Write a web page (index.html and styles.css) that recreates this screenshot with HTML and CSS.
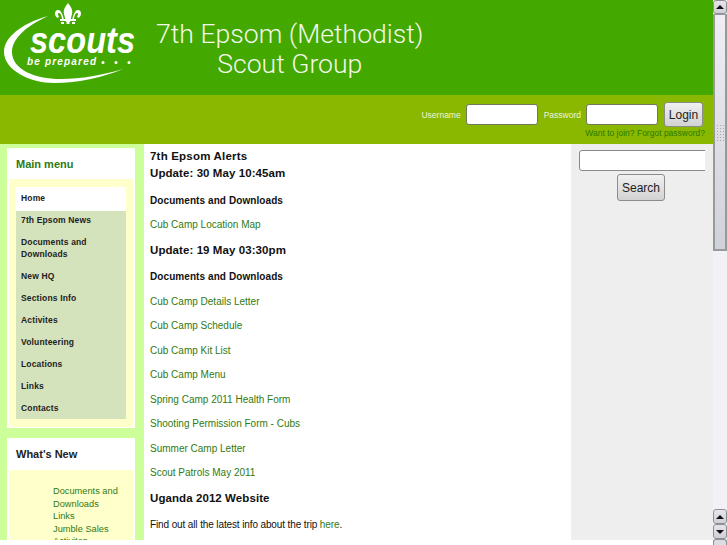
FILE: index.html
```html
<!DOCTYPE html>
<html lang="en">
<head>
  <meta charset="UTF-8">
  <title>7th Epsom (Methodist) Scout Group</title>
  <link rel="stylesheet" href="styles.css">
</head>
<body>
  <div class="page">
    <div class="header">
      <svg class="logo" width="140" height="95" viewBox="0 0 140 95">
        <!-- fleur de lis -->
        <g fill="#fff">
          <path d="M68 3c3 4 5 7 4 11l-2 8h-4l-2-8c-1-4 1-7 4-11z"/>
          <path d="M64 20c-1-5-3-10-6-10-4 0-4 7 0 8l1-2c-2-1-1-3 0-3 2 0 3 4 3 7zM72 20c1-5 3-10 6-10 4 0 4 7 0 8l-1-2c2-1 1-3 0-3-2 0-3 4-3 7z"/>
          <rect x="60" y="19" width="16" height="2"/>
          <path d="M61 22h3v2h-3zM66.500 22h3v2h-3zM72 22h3v2h-3z"/>
        </g>
        <!-- swoosh -->
        <path fill="#fff" d="M48 16C20 24 4 38 4 52c0 18 26 31 50 31 25 0 50-6 69-14-20 6-42 10-62 10C34 79 12 69 12 52c0-13 14-26 36-36z"/>
        <text class="logo-word" x="30" y="53" textLength="105" lengthAdjust="spacingAndGlyphs">scouts</text>
        <text class="logo-tag" x="27" y="65" textLength="69">be prepared</text>
        <circle cx="103" cy="62.500" r="1.500" fill="#fff"/>
        <circle cx="116" cy="62.500" r="1.500" fill="#fff"/>
        <circle cx="129" cy="62.500" r="1.500" fill="#fff"/>
      </svg>
      <h1 class="site-name">7th Epsom (Methodist)<br>Scout Group</h1>
    </div>

    <div class="login-bar">
      <div class="login-row">
        <label class="login-label">Username</label>
        <input class="text-box login-box" type="text">
        <label class="login-label">Password</label>
        <input class="text-box login-box" type="text">
        <button class="btn login-btn">Login</button>
      </div>
      <div class="login-links"><a href="#">Want to join?</a> <a href="#">Forgot password?</a></div>
    </div>

    <div class="columns">
      <div class="left-col">
        <div class="block">
          <h2 class="block-title green">Main menu</h2>
          <div class="block-body">
            <ul class="menu">
              <li class="current"><a href="#">Home</a></li>
              <li><a href="#">7th Epsom News</a></li>
              <li><a href="#">Documents and Downloads</a></li>
              <li><a href="#">New HQ</a></li>
              <li><a href="#">Sections Info</a></li>
              <li><a href="#">Activites</a></li>
              <li><a href="#">Volunteering</a></li>
              <li><a href="#">Locations</a></li>
              <li><a href="#">Links</a></li>
              <li><a href="#">Contacts</a></li>
            </ul>
          </div>
        </div>
        <div class="block">
          <h2 class="block-title">What's New</h2>
          <div class="block-body news-body">
            <ul class="news">
              <li><a href="#">Documents and Downloads</a></li>
              <li><a href="#">Links</a></li>
              <li><a href="#">Jumble Sales</a></li>
              <li><a href="#">Activites</a></li>
            </ul>
          </div>
        </div>
      </div>

      <div class="content">
        <div class="alerts-title">7th Epsom Alerts</div>
        <h3>Update: 30 May 10:45am</h3>
        <p><strong>Documents and Downloads</strong></p>
        <p><a href="#">Cub Camp Location Map</a></p>
        <h3>Update: 19 May 03:30pm</h3>
        <p><strong>Documents and Downloads</strong></p>
        <p><a href="#">Cub Camp Details Letter</a></p>
        <p><a href="#">Cub Camp Schedule</a></p>
        <p><a href="#">Cub Camp Kit List</a></p>
        <p><a href="#">Cub Camp Menu</a></p>
        <p><a href="#">Spring Camp 2011 Health Form</a></p>
        <p><a href="#">Shooting Permission Form - Cubs</a></p>
        <p><a href="#">Summer Camp Letter</a></p>
        <p><a href="#">Scout Patrols May 2011</a></p>
        <h3>Uganda 2012 Website</h3>
        <p class="tight">Find out all the latest info about the trip <a href="#">here</a>.</p>
      </div>

      <div class="right-col">
        <div class="search-clip"><input class="text-box search-box" type="text"></div>
        <button class="btn search-btn">Search</button>
      </div>
    </div>
  </div>

  <div class="scrollbar">
    <div class="arrow top-arrow"><span class="tri-up"></span></div>
    <div class="thumb"><span class="grip"></span></div>
    <div class="track"></div>
    <div class="arrow"><span class="tri-up"></span></div>
    <div class="arrow"><span class="tri-down"></span></div>
    <div class="arrow-stub"></div>
  </div>
</body>
</html>
```

FILE: styles.css
```css
html, body {
  height: 100%;
  margin: 0;
  overflow: hidden;
}
body {
  display: flex;
  font-family: "Liberation Sans", Arial, sans-serif;
  font-size: 10px;
  color: #111;
  background: #fff;
}
a {
  color: #2f7a12;
  text-decoration: none;
}

.page {
  width: 713px;
  height: 540px;
  overflow: hidden;
  flex: none;
}

/* header */
.header {
  height: 95px;
  background: #43a800;
  display: flex;
}
.logo {
  flex: none;
}
.logo-word {
  font-size: 37px;
  font-weight: bold;
  font-style: italic;
  fill: #fff;
}
.logo-tag {
  font-size: 10px;
  font-weight: bold;
  font-style: italic;
  fill: #fff;
}
.site-name {
  margin: 19px 0 0 16px;
  font-family: Roboto, sans-serif;
  font-weight: 300;
  font-size: 26.600px;
  line-height: 29.500px;
  color: #f2f8ea;
  text-align: center;
}

/* login */
.login-bar {
  height: 49px;
  background: #8ab800;
  box-sizing: border-box;
  padding: 7px 8px 0 0;
}
.login-row {
  display: flex;
  justify-content: flex-end;
  align-items: center;
  height: 25px;
  padding-right: 2px;
}
.login-label {
  color: #eef5d8;
  font-size: 8.500px;
  margin-right: 5px;
}
.login-box {
  width: 72px;
  margin-right: 6px;
}
.login-links {
  text-align: right;
  font-size: 8.500px;
  margin-top: 1px;
}
.login-links a {
  color: #2a7a00;
}

.text-box {
  height: 21px;
  box-sizing: border-box;
  border: 1px solid #6f7a5c;
  border-radius: 3px;
  background: #fff;
  padding: 0;
  display: block;
}
.btn {
  font-family: "Liberation Sans", Arial, sans-serif;
  font-size: 12px;
  color: #222;
  border: 1px solid #8c8c8c;
  border-radius: 3px;
  background: linear-gradient(#f0f0f0, #d2d2d2);
  padding: 0;
}
.login-btn {
  width: 39px;
  height: 25px;
}

/* columns */
.columns {
  display: flex;
  height: 396px;
  background: #fff;
}
.left-col {
  width: 144px;
  flex: none;
  box-sizing: border-box;
  background: #ccff99;
  padding: 4px 9px 0 7px;
}
.block {
  background: #fff;
  padding: 0 2px 1px;
  margin-bottom: 10px;
}
.block-title {
  margin: 0;
  height: 31px;
  padding: 9px 0 0 7px;
  box-sizing: border-box;
  font-size: 11px;
  line-height: 14px;
  color: #222;
}
.block-title.green {
  color: #2f7a12;
}
.block-body {
  background: #ffffcc;
  padding: 8px 7px;
}
.menu {
  list-style: none;
  margin: 0;
  padding: 0;
  background: #d5e3bc;
}
.menu li {
  padding: 5px;
  line-height: 12px;
  font-size: 8.500px;
  font-weight: bold;
  letter-spacing: 0.15px;
}
.menu li a {
  color: #222;
}
.menu li.current {
  background: #fff;
  padding-bottom: 7px;
}
.menu li.current + li {
  padding-top: 3px;
}
.news-body {
  margin-top: 1px;
  padding: 15px 7px 9px 44px;
}
.news {
  list-style: none;
  margin: 0;
  padding: 0;
  font-size: 9.250px;
  line-height: 12.500px;
}

/* main text */
.content {
  flex: 1;
  min-width: 0;
  padding: 5px 6px 0;
  font-size: 10px;
  line-height: 12px;
}
.alerts-title {
  font-size: 11.500px;
  font-weight: bold;
  letter-spacing: 0.2px;
  line-height: 14px;
}
.content h3 {
  font-size: 11.500px;
  line-height: 14px;
  margin: 3px 0 0;
  letter-spacing: 0.08px;
}
.content strong {
  letter-spacing: 0.08px;
}
.content p {
  margin: 12.500px 0 0;
}
.content h3 + p {
  margin-top: 14.500px;
}
.content p + h3 {
  margin-top: 11.500px;
}
.content .tight {
  letter-spacing: -0.12px;
}

/* right column */
.right-col {
  width: 142px;
  flex: none;
  background: #eeeeee;
  box-sizing: border-box;
  padding: 6px 8px 0;
  display: flex;
  flex-direction: column;
  align-items: center;
}
.search-clip {
  width: 100%;
  overflow: hidden;
}
.search-box {
  width: 140px;
  border-color: #888;
}
.search-btn {
  width: 48px;
  height: 27px;
  margin: 3px 2px 0 0;
}

/* scrollbar */
.scrollbar {
  flex: 1;
  display: flex;
  flex-direction: column;
  background: #f2f2f6;
}
.thumb {
  height: 237px;
  box-sizing: border-box;
  background: linear-gradient(#eeeef3, #d0d2da);
  border: 1px solid #999;
  border-width: 1px 2px 2px;
  display: flex;
  align-items: center;
  justify-content: center;
}
.grip {
  width: 9px;
  height: 17px;
  background-image: radial-gradient(#a4a4aa 40%, transparent 45%);
  background-size: 3px 3px;
}
.track {
  flex: 1;
}
.arrow {
  height: 15px;
  flex: none;
  box-sizing: border-box;
  border: 1px solid #8e8e94;
  border-radius: 3px;
  background: linear-gradient(#e6e6ea, #cfcfd6);
  display: flex;
  align-items: center;
  justify-content: center;
}
.top-arrow {
  height: 14px;
}
.tri-up {
  border: 4px solid transparent;
  border-top: 0;
  border-bottom: 4px solid #111;
}
.tri-down {
  border: 4px solid transparent;
  border-bottom: 0;
  border-top: 4px solid #111;
}
.arrow-stub {
  height: 6px;
  flex: none;
  border: 1px solid #8e8e94;
  border-bottom: 0;
  border-radius: 3px 3px 0 0;
  background: #dcdce2;
  box-sizing: border-box;
}
```
